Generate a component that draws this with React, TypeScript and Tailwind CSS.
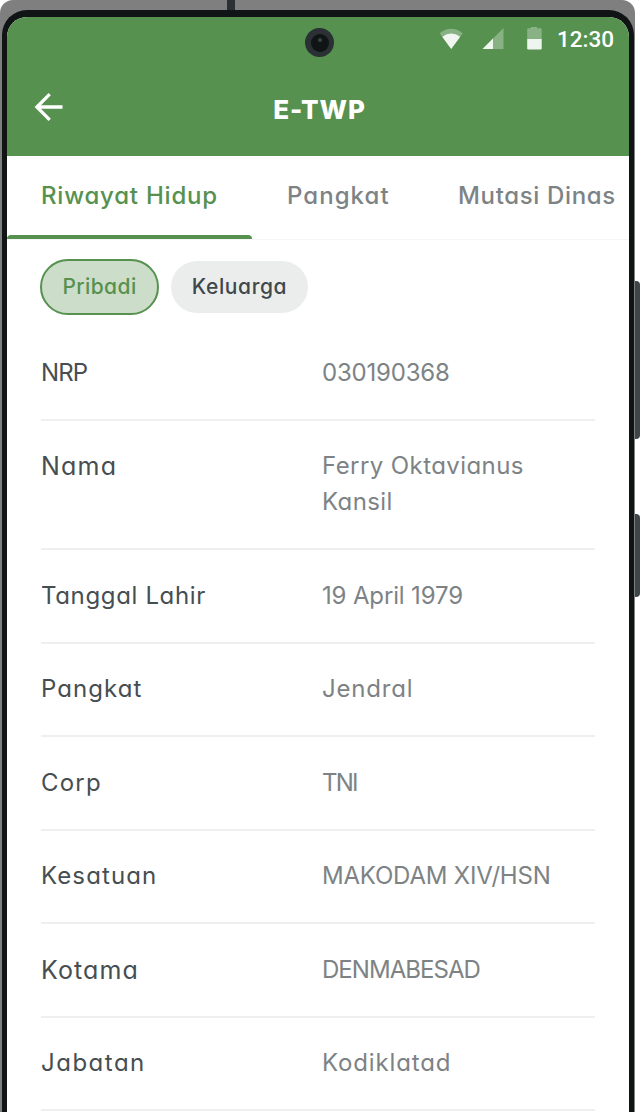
import React from "react";

type Row = { label: string; labelClass: string; lines: { text: string; cls: string }[] };

const rows: Row[] = [
  { label: "NRP", labelClass: "tracking-[-0.9px]", lines: [{ text: "030190368", cls: "tracking-[-0.2px]" }] },
  {
    label: "Nama",
    labelClass: "text-[25px] tracking-[1.2px]",
    lines: [
      { text: "Ferry Oktavianus", cls: "tracking-[0.42px]" },
      { text: "Kansil", cls: "tracking-[0.4px]" },
    ],
  },
  { label: "Tanggal Lahir", labelClass: "tracking-[0.65px]", lines: [{ text: "19 April 1979", cls: "tracking-[-0.15px]" }] },
  { label: "Pangkat", labelClass: "tracking-[1.05px]", lines: [{ text: "Jendral", cls: "tracking-[0.8px]" }] },
  { label: "Corp", labelClass: "tracking-[1.2px]", lines: [{ text: "TNI", cls: "tracking-[-1.8px]" }] },
  { label: "Kesatuan", labelClass: "tracking-[1.1px]", lines: [{ text: "MAKODAM XIV/HSN", cls: "tracking-[-0.2px]" }] },
  { label: "Kotama", labelClass: "text-[25px] tracking-[1.1px]", lines: [{ text: "DENMABESAD", cls: "tracking-[-0.95px]" }] },
  { label: "Jabatan", labelClass: "tracking-[1.5px]", lines: [{ text: "Kodiklatad", cls: "tracking-[0.85px]" }] },
];

function StatusBar() {
  return (
    <div className="flex h-[44px] items-center justify-end pr-[15px]">
      <svg className="mr-[18px] h-[22px] w-[25px]" viewBox="0 0 25 22" fill="#fff">
        <path fillOpacity=".3" d="M0.7 5.2Q12.2-3.6 23.7 5.2L12.2 21Z" />
        <path fillOpacity=".88" d="M3.2 8.7Q12.2 2.3 21.2 8.7L12.2 21Z" />
      </svg>
      <svg className="mr-[22px] h-[22px] w-[22px]" viewBox="0 0 22 22" fill="#fff">
        <path fillOpacity=".3" d="M21.5 0v21H.5Z" />
        <path fillOpacity=".88" d="M11 10.5V21H.5Z" />
      </svg>
      <svg className="mr-[14px] h-[24px] w-[17px]" viewBox="0 0 17 24" fill="#fff">
        <path fillOpacity=".3" d="M5 0h6v1.3h3.5q1.2 0 1.2 1.2V12H1.2V2.5Q1.2 1.3 2.4 1.3H5Z" />
        <path fillOpacity=".9" d="M1.2 12h14.5v9.3q0 1.2-1.2 1.2H2.4q-1.2 0-1.2-1.2Z" />
      </svg>
      <span className="font-['Roboto'] text-[22.5px] leading-none font-medium text-white">12:30</span>
    </div>
  );
}

function Camera() {
  return (
    <div className="absolute top-[11px] left-[298px] flex size-[29px] items-center justify-center rounded-full bg-[#2a3033]">
      <div className="flex size-[18px] justify-center rounded-full bg-[#101415] pt-[4px]">
        <div className="size-[4px] rounded-full bg-[#3c4244]" />
      </div>
    </div>
  );
}

export default function App() {
  return (
    <div className="flex h-[1112px] w-[640px] overflow-hidden bg-white font-['Inter',sans-serif] [font-feature-settings:'cv11']">
      <div className="relative h-full w-[635px] shrink-0 rounded-t-[13px] bg-[#7f7f7f] pt-[10px] pr-[1.5px] pl-[2px]">
        <div className="absolute top-0 left-[227px] h-[10px] w-[8px] bg-[#2a3033]" />
        <div className="h-full rounded-t-[25px] bg-[#101415] pt-[7px] pr-[4.5px] pl-[5px]">
          <div className="relative h-full overflow-hidden rounded-t-[20px] bg-white">
            <header className="h-[138.5px] bg-[#56914f]">
              <StatusBar />
              <Camera />
              <div className="relative flex h-[94px] items-center justify-center pt-[3px] pl-[3px]">
                <svg className="absolute top-[31px] left-[27px] size-[30px]" viewBox="0 0 30 30" fill="none" stroke="#fff" strokeWidth="3.3">
                  <path d="M28.5 15H3M15.7 2.2 2.9 15l12.8 12.8" />
                </svg>
                <h1 className="text-[26px] leading-none font-extrabold tracking-[0.9px] text-white">E-TWP</h1>
              </div>
            </header>
            <nav className="flex h-[84.5px] border-b border-[#f5f5f5] text-[24px] leading-[36px] font-medium whitespace-nowrap text-[#7d8385]">
              <div className="relative w-[245px] shrink-0 pt-[22.5px] pl-[34px] tracking-[0.78px] text-[#56914f]">
                Riwayat Hidup
                <div className="absolute bottom-0 left-0 h-[4px] w-[245px] rounded-t-[4px] bg-[#56914f]" />
              </div>
              <div className="w-[171px] shrink-0 pt-[22.5px] pl-[35px] tracking-[1.05px]">Pangkat</div>
              <div className="shrink-0 pt-[22.5px] pl-[35px] tracking-[0.65px]">Mutasi Dinas</div>
            </nav>
            <div className="flex h-[87px] items-start gap-[12px] pt-[19px] pl-[33px] text-[21px] font-medium">
              <div className="flex h-[56px] w-[119px] items-center justify-center rounded-full border-2 border-[#56914f] bg-[#ccddca] tracking-[0.4px] text-[#56914f]">Pribadi</div>
              <div className="mt-[2px] flex h-[52px] w-[137px] items-center justify-center rounded-full bg-[#ebeded] tracking-[0.6px] text-[#3f484b]">Keluarga</div>
            </div>
            <div className="mr-[34px] ml-[34px] text-[24px] leading-[36px] whitespace-nowrap">
              {rows.map((r) => (
                <div key={r.label} className="flex border-b-2 border-[#efefef] py-[27.75px]">
                  <div className="h-[36px] w-[281px] text-[#464e51]">
                    <span className={r.labelClass}>{r.label}</span>
                  </div>
                  <div className="text-[#7d8385]">
                    {r.lines.map((l) => (
                      <div key={l.text} className={l.cls}>{l.text}</div>
                    ))}
                  </div>
                </div>
              ))}
            </div>
          </div>
        </div>
      </div>
      <div className="flex w-[5px] flex-col pt-[281px]">
        <div className="h-[158px] rounded-r-[4px] bg-[#3f4648]" />
        <div className="mt-[75px] h-[83px] rounded-r-[4px] bg-[#3f4648]" />
      </div>
    </div>
  );
}
